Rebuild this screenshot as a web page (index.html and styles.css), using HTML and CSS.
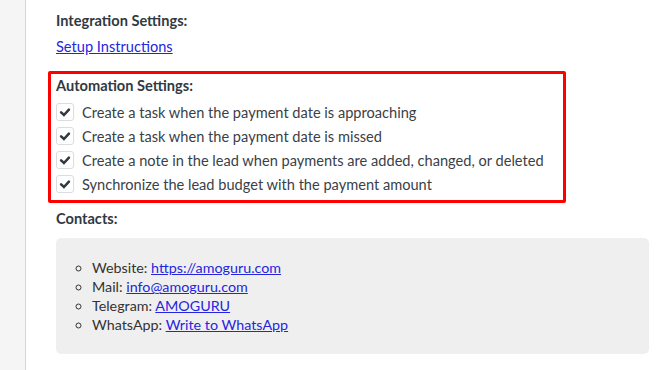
FILE: index.html
```html
<!DOCTYPE html>
<html>
<head>
<meta charset="utf-8">
<link rel="stylesheet" href="styles.css">
</head>
<body>
<div class="page">
  <aside class="sidebar"></aside>
  <main class="main">
    <div class="heading">Integration Settings:</div>
    <div class="linkline"><a href="#">Setup Instructions</a></div>
    <section class="highlight">
      <div class="heading">Automation Settings:</div>
      <label class="row"><span class="box"><svg viewBox="0 0 18 18" width="18" height="18"><path d="M4.6 9.4 L7.8 12.4 L13.4 6.4" fill="none" stroke="#313942" stroke-width="2.9" stroke-linecap="round" stroke-linejoin="miter"/></svg></span><span>Create a task when the payment date is approaching</span></label>
      <label class="row"><span class="box"><svg viewBox="0 0 18 18" width="18" height="18"><path d="M4.6 9.4 L7.8 12.4 L13.4 6.4" fill="none" stroke="#313942" stroke-width="2.9" stroke-linecap="round" stroke-linejoin="miter"/></svg></span><span>Create a task when the payment date is missed</span></label>
      <label class="row"><span class="box"><svg viewBox="0 0 18 18" width="18" height="18"><path d="M4.6 9.4 L7.8 12.4 L13.4 6.4" fill="none" stroke="#313942" stroke-width="2.9" stroke-linecap="round" stroke-linejoin="miter"/></svg></span><span>Create a note in the lead when payments are added, changed, or deleted</span></label>
      <label class="row"><span class="box"><svg viewBox="0 0 18 18" width="18" height="18"><path d="M4.6 9.4 L7.8 12.4 L13.4 6.4" fill="none" stroke="#313942" stroke-width="2.9" stroke-linecap="round" stroke-linejoin="miter"/></svg></span><span>Synchronize the lead budget with the payment amount</span></label>
    </section>
    <div class="heading contacts">Contacts:</div>
    <div class="card">
      <ul class="list">
        <li>Website: <a href="#">https://amoguru.com</a></li>
        <li>Mail: <a href="#">info@amoguru.com</a></li>
        <li>Telegram: <a href="#">AMOGURU</a></li>
        <li>WhatsApp: <a href="#">Write to WhatsApp</a></li>
      </ul>
    </div>
  </main>
</div>
</body>
</html>
```
FILE: styles.css
```css
html, body {
  margin: 0;
  padding: 0;
  background: #fff;
}
body {
  font-family: Lato, "Liberation Sans", sans-serif;
  font-size: 14.6px;
  color: #3b4047;
}
.page {
  display: flex;
  height: 370px;
}
.sidebar {
  width: 25px;
  background: #f5f5f5;
  border-right: 1px solid #d6d6d6;
  flex: none;
}
.main {
  padding: 11px 0 0 30px;
  width: 593px;
}
.heading {
  font-weight: bold;
  line-height: 20px;
  color: #313942;
}
.linkline {
  margin-top: 6px;
  line-height: 20px;
}
a {
  color: #2525e0;
  text-decoration: underline;
}
.highlight {
  margin: 14px 0 0 -8px;
  width: 502px;
  border: 3px solid #f00;
  border-radius: 2px;
  padding: 2px 5px 4px 5px;
}
.highlight .heading {
  margin-bottom: 4px;
}
.row {
  display: flex;
  align-items: center;
  gap: 8px;
  height: 24px;
}
.box {
  width: 18px;
  height: 18px;
  box-sizing: border-box;
  border: 1px solid #dcdcdc;
  border-radius: 3px;
  background: #fff;
  display: flex;
  align-items: center;
  justify-content: center;
  flex: none;
}
.box svg {
  display: block;
}
.contacts {
  margin-top: 6px;
}
.card {
  margin-top: 9px;
  height: 116px;
  box-sizing: border-box;
  background: #efefef;
  border-radius: 5px;
  padding-top: 20px;
}
.list {
  margin: 0;
  padding-left: 36px;
  list-style: circle;
  line-height: 19px;
  font-size: 14.3px;
  color: #333;
}
```
